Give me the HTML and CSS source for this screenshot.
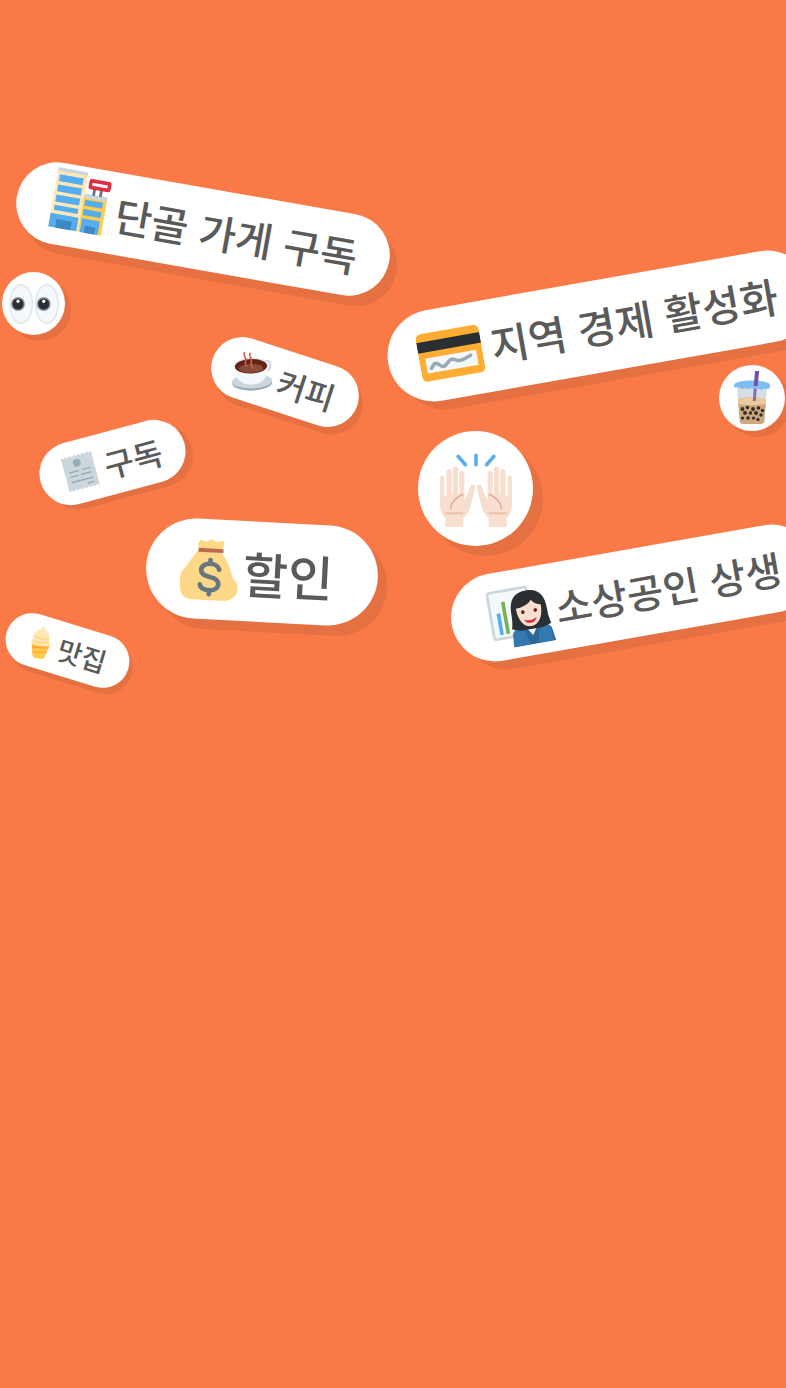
FILE: index.html
```html
<!DOCTYPE html>
<html lang="ko">
<head>
<meta charset="utf-8">
<title>스티커</title>
<link rel="stylesheet" href="styles.css">
</head>
<body>
<main class="canvas">

<div class="pill dangol">
  <svg class="icon" viewBox="0 0 36 36"><rect x="3" y="1" width="17.500" height="34" fill="#FFE8B6"/><rect x="3" y="0" width="17.500" height="2" fill="#CCD6DD"/><g fill="#55ACEE"><rect x="4.500" y="4" width="14" height="4"/><rect x="4.500" y="10" width="14" height="4"/><rect x="4.500" y="16" width="14" height="4"/><rect x="4.500" y="22" width="14" height="3"/><rect x="3" y="27" width="16.500" height="8"/></g><rect x="7" y="30" width="9" height="5" fill="#3B88C3"/><rect x="20.500" y="14" width="13.500" height="21" fill="#FFCC4D"/><rect x="20.500" y="12.500" width="13.500" height="2.500" fill="#CCD6DD"/><g fill="#55ACEE"><rect x="21.500" y="16" width="10.500" height="3.500"/><rect x="21.500" y="21.500" width="10.500" height="3.500"/><rect x="21.500" y="27" width="10.500" height="8"/></g><rect x="24" y="31" width="6" height="4" fill="#3B88C3"/><rect x="25" y="8" width="1.600" height="5" fill="#66757F"/><rect x="29" y="8" width="1.600" height="5" fill="#66757F"/><rect x="22" y="3.500" width="13" height="6" rx="1.500" fill="#DD2E44"/><rect x="24" y="5.600" width="9" height="1.800" fill="#F5F8FA"/></svg>
  <span class="label">단골 가게 구독</span>
</div>

<div class="pill jiyeok">
  <svg class="icon" viewBox="0 0 36 36"><rect x="0" y="5" width="36" height="27" rx="3" fill="#FFAC33"/><rect x="0" y="9.500" width="36" height="6" fill="#292F33"/><rect x="3.500" y="19" width="29" height="8.500" fill="#F5F8FA"/><path d="M6 25c2-3 3-3 5-1s3 1 5-1 3-1 5 0 4 0 8-1.500" fill="none" stroke="#99AAB5" stroke-width="2" stroke-linecap="round"/></svg>
  <span class="label">지역 경제 활성화</span>
</div>

<div class="pill sosang">
  <svg class="icon" viewBox="0 0 36 36"><rect x="1.500" y="4" width="22" height="26" rx="1.500" fill="#F5F8FA" stroke="#CCD6DD" stroke-width="1.500"/><rect x="5" y="16" width="2" height="12" fill="#55ACEE"/><rect x="8.500" y="10" width="2" height="18" fill="#77B255"/><path d="M11.500 36l.5-7c.5-2 3-3.500 6-4h10c3 .5 5.500 2 6 4l1 7z" fill="#2A6797"/><path d="M12 36v-7c.5-2 3-3.500 6-4l3 11zM34 36l-.5-7c-.5-2-3-3.500-5.500-4l-3 11z" fill="#3B88C3" opacity=".55"/><path d="M19 25h8l-4 6z" fill="#F5F8FA"/><path d="M13 18c0-8 3-12 10-12s10 4 10 12c0 4 .5 6 1 8l-5 1.500H17L12 26c.5-2 1-4 1-8z" fill="#292F33"/><path d="M16 15c3 0 7-1 9-3.500 1 2 3 3 5 3.500 0 7-3 11-7 11s-7-4-7-11z" fill="#F7DECE"/><circle cx="19.500" cy="17.500" r="1" fill="#662113"/><circle cx="26.500" cy="17.500" r="1" fill="#662113"/><path d="M19.500 21.800c2.500 1.200 4.500 1 7-.3-1 3.500-6 3.500-7 .3z" fill="#DD2E44"/></svg>
  <span class="label">소상공인 상생</span>
</div>

<div class="pill keopi">
  <svg class="icon" viewBox="0 0 36 36"><ellipse cx="18" cy="28.500" rx="18" ry="7" fill="#99AAB5"/><ellipse cx="18" cy="27" rx="18" ry="6.500" fill="#CCD6DD"/><path d="M28 10c5-2 8 0 7 4s-4 5-6 5" fill="none" stroke="#CCD6DD" stroke-width="2"/><path d="M2 13c0 10 5 17 15.500 17S33 23 33 13z" fill="#F5F8FA"/><ellipse cx="17.500" cy="13" rx="15.500" ry="7.500" fill="#E1E8ED"/><ellipse cx="17.500" cy="13.500" rx="14.500" ry="6.500" fill="#662113"/><ellipse cx="17.500" cy="15.500" rx="11" ry="4" fill="#8A4B38"/><g fill="none" stroke="#C1694F" stroke-width="1.500" stroke-linecap="round"><path d="M12 1c-2 3 2 4 1 7s0 4 0 5"/><path d="M17 2c-2 3 2 4 1 7s0 4 1 6"/></g></svg>
  <span class="label">커피</span>
</div>

<div class="pill gudok">
  <svg class="icon" viewBox="0 0 36 36"><path d="M4 2l2 1.500L8 2l2 1.500L12 2l2 1.500L16 2l2 1.500L20 2l2 1.500L24 2l2 1.500L28 2l2 1.500L32 2v32l-2-1.500-2 1.500-2-1.500-2 1.500-2-1.500-2 1.500-2-1.500-2 1.500-2-1.500-2 1.500-2-1.500-2 1.500-2-1.500-2 1.500z" fill="#CCD6DD"/><circle cx="17" cy="9.500" r="3.500" fill="#99AAB5"/><g fill="#99AAB5"><rect x="8" y="16" width="9" height="1.300"/><rect x="20" y="16" width="8" height="1.300"/><rect x="8" y="20" width="8" height="1.300"/><rect x="18" y="20" width="10" height="1.300"/><rect x="8" y="25" width="20" height="1.300"/><rect x="22" y="29" width="6" height="1.300"/></g></svg>
  <span class="label">구독</span>
</div>

<div class="pill halin">
  <svg class="icon" viewBox="0 0 36 40"><path d="M11 1.500c1.500-1 2.500.5 4 .5s2-1.500 3-1.500 2 1.500 3.500 1.500 2.500-1.500 4-.5c1 1.500 0 3.500-1.500 5l.5 2c3 3 6 10 7.500 15 2.500 1.500 3.500 4 3 7-.5 4-4 6-7 6.500H8c-4 0-7-2-7.500-7C0 26 0 22 1.500 20c2-2 4-6 8-11.500l1.500-2C9.500 5 10 3 11 1.500z" fill="#FDD888"/><path d="M10.500 6h15v2.400h-15z" fill="#BF6952"/><g fill="none" stroke="#67757F" stroke-width="2.800" stroke-linecap="round"><path d="M23.500 18.500c-.5-2-2.800-3.300-5.500-3.300-3 0-5.300 1.600-5.300 4s2.300 3.400 5.300 3.900 5.400 1.500 5.400 4-2.400 4-5.400 4-5.300-1.200-5.700-3.300"/><path d="M18 13v2M18 31v2.500"/></g></svg>
  <span class="label">할인</span>
</div>

<div class="pill matjip">
  <svg class="icon" viewBox="0 0 36 36"><path d="M8 18h20l-3 15c-1 2-2 3-7 3s-6-1-7-3z" fill="#FFCC4D"/><path d="M9 23l19-2-.6 3-18 2zM10.500 29l15.500-2-.4 2-14.600 2z" fill="#FFAC33"/><path d="M18 0c1 2 4 3 5 6 3 1 4 5 4 9 1 3 1 5-1 6-3 1-13 1-16 0-2-1-2-3-1-6 0-4 1-8 4-9 2-2 4-3 5-6z" fill="#FFE8B6"/><path d="M10 12c4 3 11 3 16 0M10 17c4 2 12 2 17-1" fill="none" stroke="#FFD983" stroke-width="2"/></svg>
  <span class="label">맛집</span>
</div>

<div class="round nun">
  <svg class="icon" viewBox="0 0 36 36"><ellipse cx="8.700" cy="18" rx="8.700" ry="14.500" fill="#E1E8ED"/><ellipse cx="8.700" cy="18" rx="7.500" ry="13.200" fill="#F5F8FA"/><ellipse cx="27.300" cy="18" rx="8.700" ry="14.500" fill="#E1E8ED"/><ellipse cx="27.300" cy="18" rx="7.500" ry="13.200" fill="#F5F8FA"/><circle cx="6.500" cy="18" r="5" fill="#8899A6"/><circle cx="25" cy="18" r="5" fill="#8899A6"/><circle cx="6.500" cy="18" r="4" fill="#292F33"/><circle cx="25" cy="18" r="4" fill="#292F33"/><circle cx="6.500" cy="16" r="1.200" fill="#F5F8FA"/><circle cx="25" cy="16" r="1.200" fill="#F5F8FA"/></svg>
</div>

<div class="round boba">
  <svg class="icon" viewBox="0 0 38 54"><path d="M4 16h30l-2.500 34c-.2 2-2 3-4 3H10.500c-2 0-3.800-1-4-3z" fill="#CCD6DD" opacity=".8"/><path d="M5 28c6-2 22-2 28 0l-1.600 22c-.2 1.800-2 3-4 3H10.700c-2 0-3.800-1.200-4-3z" fill="#CFA77A"/><path d="M5 28c6-2 22-2 28 0l-.4 5c-8 1.500-19 1.500-27.200 0z" fill="#EBCB9E"/><path d="M21 14h3l-1.200 16h-3z" fill="#744EAA" opacity=".8"/><g fill="#292F33"><circle cx="9.500" cy="38" r="1.900"/><circle cx="14.500" cy="36.500" r="1.700"/><circle cx="20" cy="38" r="1.900"/><circle cx="25.500" cy="37" r="1.800"/><circle cx="29.500" cy="39.500" r="1.700"/><circle cx="12" cy="42" r="1.900"/><circle cx="17.500" cy="42" r="1.700"/><circle cx="23" cy="42" r="1.900"/><circle cx="28" cy="44" r="1.700"/><circle cx="9.500" cy="47" r="1.600"/><circle cx="15" cy="47" r="1.800"/><circle cx="20.500" cy="47" r="1.600"/><circle cx="25" cy="48.500" r="1.600"/></g><path d="M1 14c0-2.500 8-4.500 18-4.500s18 2 18 4.500v2c0 1.500-2 1.500-3.500 2-2-1-3.500 0-5 1-1.500-1-3.500-2-5.500-1-3-1-5-1-7 0-3-1-5-1-6.500 0-1.500-1-3-1-4.500-1.500S1 17 1 16z" fill="#7DBDF0"/><path d="M22 0h4.200l-1.600 15h-3.800z" fill="#744EAA"/></svg>
</div>

<div class="round manse">
  <svg class="icon" viewBox="0 0 36 36"><g fill="none" stroke="#5DADEC" stroke-width="1.700" stroke-linecap="round"><path d="M18 2v4.500M9.500 2.500l3.500 4M26.500 2.500l-3.500 4"/></g><g transform="translate(0 1.500)"><path d="M1 11c0-1 2-1 2 0v9h1V8c0-1.200 2.500-1.200 2.500 0v11h.5V7c0-1.500 2.500-1.500 2.500 0v12h.6V9c0-1.300 2.400-1.300 2.400 0v13c1-2 2-4.500 3-7 .5-1.200 2.500-.5 2 1-1 4-1.500 7-2.500 10-.5 1.500-1.500 3-3 4v6H3.500v-6C2 29 1 27 1 24z" fill="#F7DECE"/><path d="M6 26c0-3 3-6 6-7" fill="none" stroke="#E0AA94" stroke-width=".7"/><rect x="3.500" y="27.500" width="8.500" height="1" fill="#EEC2AD"/></g><g transform="matrix(-1 0 0 1 36 1.500)"><path d="M1 11c0-1 2-1 2 0v9h1V8c0-1.200 2.500-1.200 2.500 0v11h.5V7c0-1.500 2.500-1.500 2.500 0v12h.6V9c0-1.300 2.400-1.300 2.400 0v13c1-2 2-4.500 3-7 .5-1.200 2.500-.5 2 1-1 4-1.500 7-2.500 10-.5 1.500-1.500 3-3 4v6H3.500v-6C2 29 1 27 1 24z" fill="#F7DECE"/><path d="M6 26c0-3 3-6 6-7" fill="none" stroke="#E0AA94" stroke-width=".7"/><rect x="3.500" y="27.500" width="8.500" height="1" fill="#EEC2AD"/></g></svg>
</div>

</main>
</body>
</html>
```

FILE: styles.css
```css
html, body {
  margin: 0;
  padding: 0;
  height: 100%;
  background: #f97a47;
}

.canvas {
  position: relative;
  width: 786px;
  height: 1388px;
  overflow: hidden;
  background: #f97a47;
  font-family: "Noto Sans CJK KR", "Noto Sans", sans-serif;
  color: #5a5a5a;
}

.pill,
.round {
  position: absolute;
  display: flex;
  align-items: center;
  box-sizing: border-box;
  background: #fff;
  box-shadow: var(--drop) var(--drop) 0 rgba(0, 0, 0, 0.08);
}

.pill { border-radius: 60px; }

.round {
  border-radius: 50%;
  justify-content: center;
}

.label {
  font-weight: 500;
  line-height: 1;
  white-space: nowrap;
}

.icon { flex: none; display: block; }

.dangol { --drop: 9px; left: 14px; top: 188px; width: 378px; height: 82px; padding-left: 31px; gap: 7px; font-size: 40.4px; transform: rotate(10deg); }
.dangol .icon { width: 62px; height: 62px; margin-bottom: 10px; }

.jiyeok { --drop: 10px; left: 385px; top: 280px; width: 431px; height: 92px; padding-left: 31px; gap: 9px; font-size: 41.6px; transform: rotate(-10deg); }
.jiyeok .icon { width: 64px; height: 64px; }

.sosang { --drop: 10px; left: 449px; top: 549px; width: 369px; height: 88px; padding-left: 37px; gap: 3px; font-size: 39.5px; transform: rotate(-10deg); }
.sosang .icon { width: 65px; height: 65px; }

.keopi { --drop: 6px; left: 209px; top: 351px; width: 152px; height: 62px; padding-left: 21px; gap: 8px; font-size: 32px; transform: rotate(18deg); }
.keopi .icon { width: 40px; height: 40px; transform: rotate(-20deg); }

.gudok { --drop: 6px; left: 38px; top: 431px; width: 149px; height: 63px; padding-left: 21px; gap: 5px; font-size: 32px; transform: rotate(-15deg); }
.gudok .icon { width: 40px; height: 40px; }

.halin { --drop: 10px; left: 146px; top: 522px; width: 232px; height: 100px; padding-left: 34px; gap: 3px; font-size: 49px; transform: rotate(3deg); }
.halin .icon { width: 60px; height: 67px; margin-top: 4px; }

.matjip { --drop: 5px; left: 4px; top: 624px; width: 127px; height: 53px; padding-left: 19px; gap: 2px; font-size: 27px; transform: rotate(17deg); }
.matjip .icon { width: 33px; height: 33px; transform: rotate(-8deg); }

.nun { --drop: 6px; left: 2px; top: 272px; width: 63px; height: 63px; }
.nun .icon { width: 50px; height: 50px; }

.boba { --drop: 6px; left: 719px; top: 365px; width: 66px; height: 66px; }
.boba .icon { width: 38px; height: 54px; }

.manse { --drop: 10px; left: 418px; top: 431px; width: 115px; height: 115px; }
.manse .icon { width: 76px; height: 76px; }
```
